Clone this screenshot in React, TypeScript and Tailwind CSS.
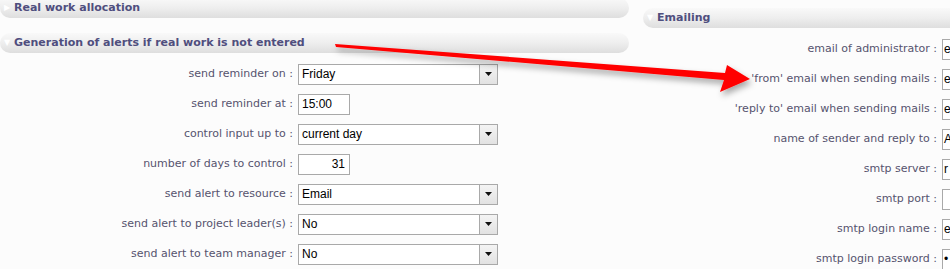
import React from "react"

const leftRows: { label: string; kind: "select" | "short" | "num"; value: string }[] = [
  { label: "send reminder on", kind: "select", value: "Friday" },
  { label: "send reminder at", kind: "short", value: "15:00" },
  { label: "control input up to", kind: "select", value: "current day" },
  { label: "number of days to control", kind: "num", value: "31" },
  { label: "send alert to resource", kind: "select", value: "Email" },
  { label: "send alert to project leader(s)", kind: "select", value: "No" },
  { label: "send alert to team manager", kind: "select", value: "No" },
]

const rightRows = [
  { label: "email of administrator", value: "e" },
  { label: "'from' email when sending mails", value: "e" },
  { label: "'reply to' email when sending mails", value: "e" },
  { label: "name of sender and reply to", value: "A" },
  { label: "smtp server", value: "r" },
  { label: "smtp port", value: "" },
  { label: "smtp login name", value: "e" },
  { label: "smtp login password", value: "•" },
]

function SectionHeader({ title, open, className }: { title: string; open: boolean; className?: string }) {
  return (
    <div
      className={`flex items-center h-[20px] rounded-[10px] bg-gradient-to-b from-[#f9f9f9] via-[#eeeeee] to-[#dedede] ${className ?? ""}`}
    >
      <span className="w-[14px] flex justify-center text-white text-[8px] leading-none">
        {open ? "▼" : "▶"}
      </span>
      <span className="text-[11px] font-bold text-[#4f4e7e] font-['DejaVu_Sans',sans-serif]">{title}</span>
    </div>
  )
}

function Select({ value }: { value: string }) {
  return (
    <div className="flex h-[21px] w-[200px] border border-[#a9a9a9] bg-white">
      <div className="flex-1 flex items-center pl-[3px] text-[12px] text-black font-['Liberation_Sans',sans-serif]">
        {value}
      </div>
      <div className="w-[18px] flex items-center justify-center border-l border-[#a9a9a9] bg-gradient-to-b from-[#f4f4f4] to-[#e2e2e2]">
        <svg width="7" height="4" viewBox="0 0 7 4">
          <path d="M0 0h7L3.5 4z" fill="#111" />
        </svg>
      </div>
    </div>
  )
}

export default function App() {
  return (
    <div className="relative w-[950px] h-[269px] overflow-hidden bg-[#fcfcfc] font-['DejaVu_Sans',sans-serif]">
      <div className="flex">
        {/* left column */}
        <div className="w-[629px] shrink-0">
          <SectionHeader title="Real work allocation" open={false} className="-mt-[2px] rounded-tl-none" />
          <SectionHeader title="Generation of alerts if real work is not entered" open className="mt-[15px]" />
          <div className="mt-[6px]">
            {leftRows.map((r) => (
              <div key={r.label} className="flex items-center h-[30px]">
                <div className="w-[293px] text-right text-[11px] text-[#56536e] whitespace-nowrap">
                  {r.label} :
                </div>
                <div className="pl-[5px]">
                  {r.kind === "select" && <Select value={r.value} />}
                  {r.kind === "short" && (
                    <div className="w-[52px] h-[21px] border border-[#a9a9a9] bg-white flex items-center pl-[3px] text-[12px] text-black font-['Liberation_Sans',sans-serif]">
                      {r.value}
                    </div>
                  )}
                  {r.kind === "num" && (
                    <div className="w-[52px] h-[21px] border border-[#a9a9a9] bg-white flex items-center justify-end pr-[4px] text-[12px] text-black font-['Liberation_Sans',sans-serif]">
                      {r.value}
                    </div>
                  )}
                </div>
              </div>
            ))}
          </div>
        </div>

        {/* right column */}
        <div className="ml-[14px] flex-1 min-w-0">
          <SectionHeader title="Emailing" open className="mt-[8px] rounded-r-none" />
          <div className="mt-[6px]">
            {rightRows.map((r) => (
              <div key={r.label} className="flex items-center h-[30px]">
                <div className="w-[294px] shrink-0 text-right text-[11px] text-[#56536e] whitespace-nowrap">
                  {r.label} :
                </div>
                <div className="pl-[5px] shrink-0">
                  <div className="w-[200px] h-[21px] border border-[#a9a9a9] bg-white flex items-center pl-[1px] text-[12px] text-black font-['Liberation_Sans',sans-serif] overflow-hidden whitespace-nowrap">
                    {r.value}
                  </div>
                </div>
              </div>
            ))}
          </div>
        </div>
      </div>

      {/* annotation arrow */}
      <svg className="absolute inset-0 pointer-events-none" width="950" height="269">
        <defs>
          <filter id="sh" x="-10%" y="-50%" width="120%" height="200%">
            <feDropShadow dx="2" dy="4" stdDeviation="3" floodColor="#000" floodOpacity="0.35" />
          </filter>
        </defs>
        <path
          d="M335 44 L336 47 L724 80 L720 92 L750 79 L727 65 L725 73 Z"
          fill="#ff0000"
          filter="url(#sh)"
        />
      </svg>
    </div>
  )
}
